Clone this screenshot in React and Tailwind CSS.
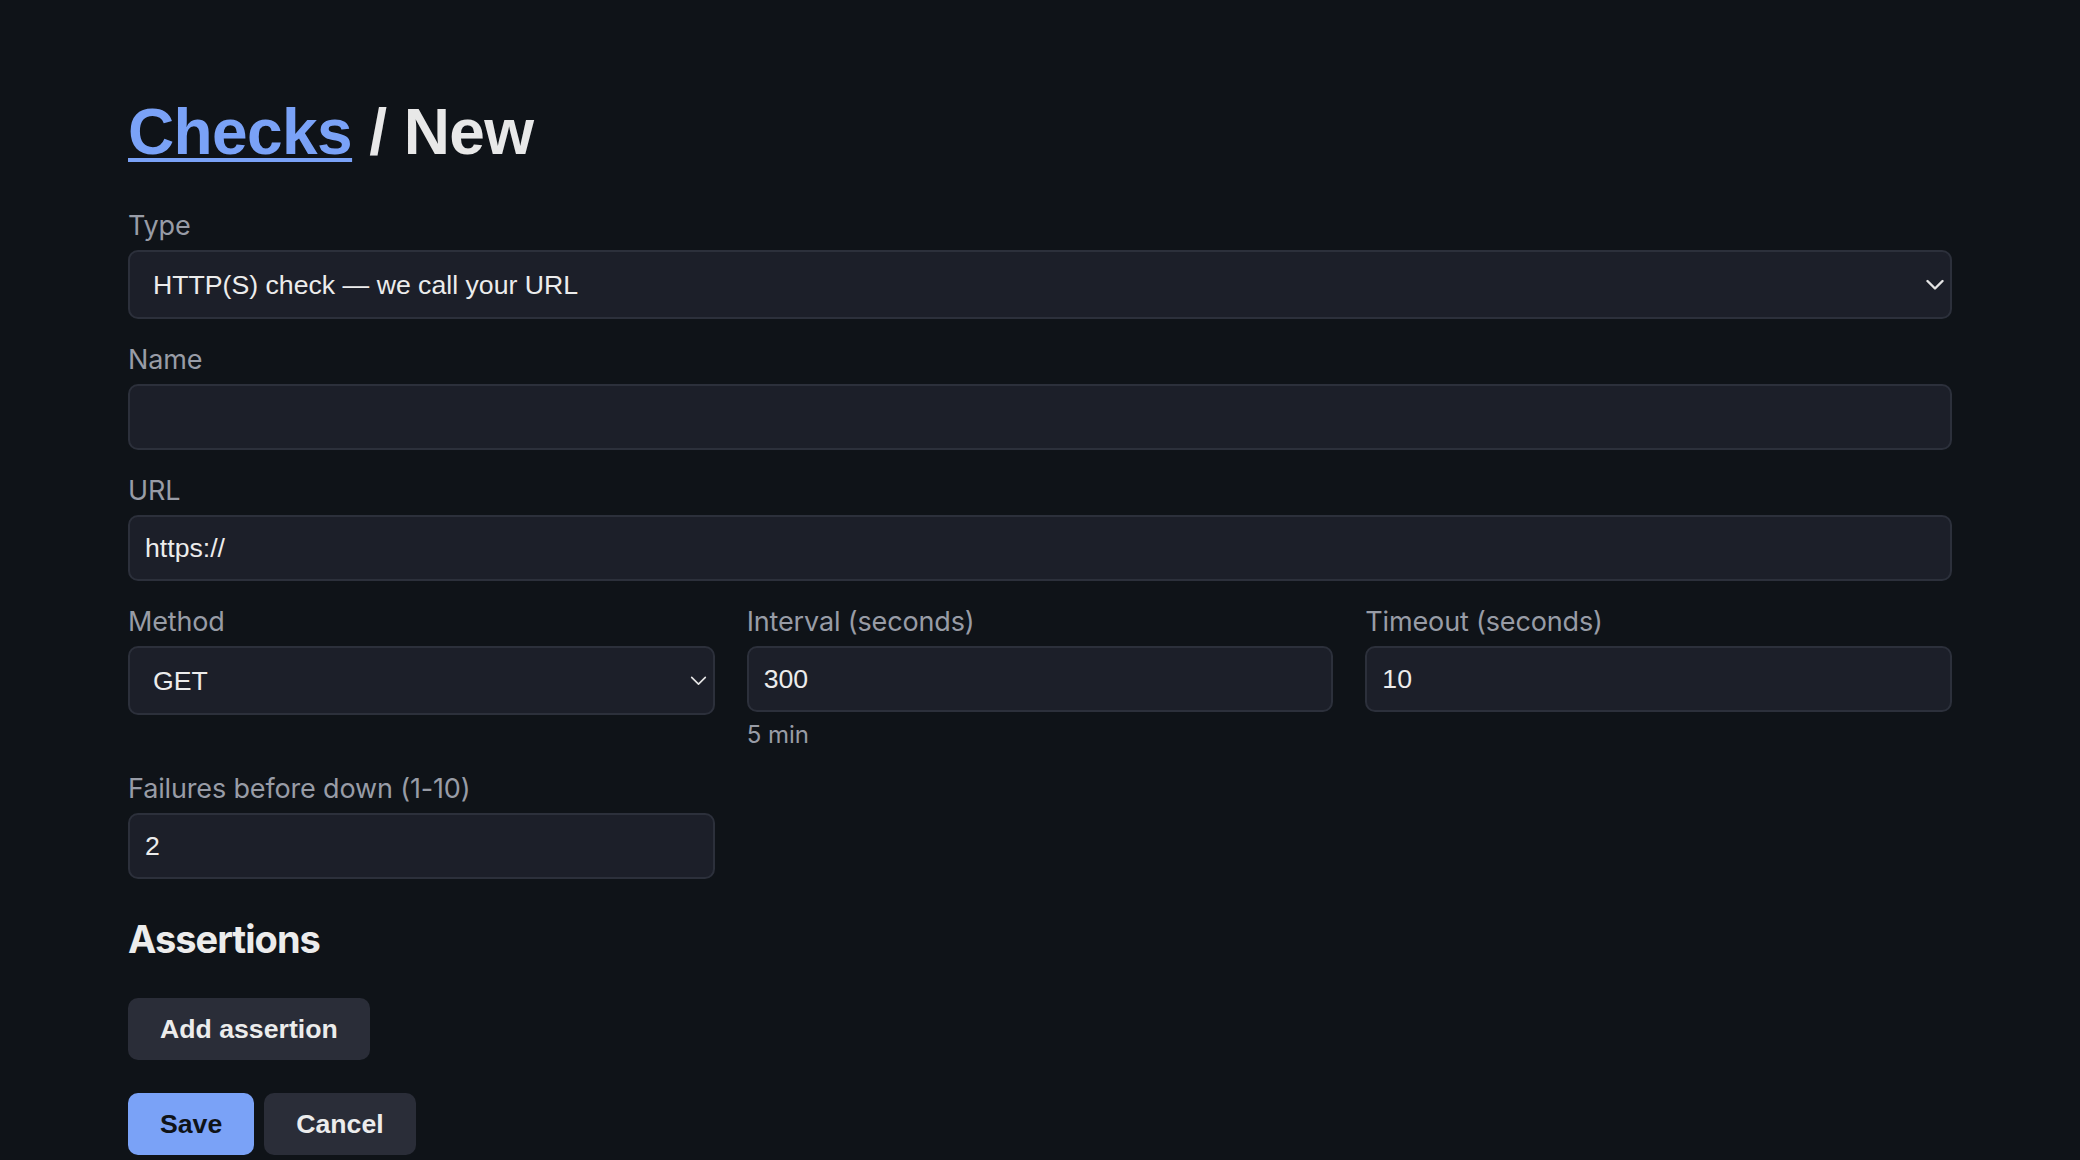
import React from 'react';

const labelCls = "block mb-2 text-[27px] leading-[33px] tracking-[-0.15px] text-[#989ca6] font-['Inter',sans-serif]";
const fieldCls =
  "w-full rounded-[10px] border-2 border-[#2c303b] bg-[#1c1f29] text-[26.67px] text-[#ececec] outline-none font-['Liberation_Sans',Arial,sans-serif]";

const Chevron = ({ size = 'w-[18px] h-[11px]', stroke = 2.4 }) => (
  <svg className={size} viewBox="0 0 18 11" fill="none">
    <path d="M1.5 1.5 L9 9 L16.5 1.5" stroke="#e4e4e4" strokeWidth={stroke} strokeLinecap="round" strokeLinejoin="round" />
  </svg>
);

const SelectField = ({ label, value, options, small }) => (
  <div>
    <label className={labelCls}>{label}</label>
    <div className="relative">
      <select defaultValue={value} className={`${fieldCls} h-[69px] appearance-none pl-[23px] pr-12`}>
        {options.map((o) => (
          <option key={o}>{o}</option>
        ))}
      </select>
      <span className="pointer-events-none absolute right-[8px] top-1/2 -translate-y-1/2">
        {small ? <Chevron size="w-[17px] h-[10px]" stroke={1.8} /> : <Chevron />}
      </span>
    </div>
  </div>
);

const TextField = ({ label, value, hint }) => (
  <div>
    <label className={labelCls}>{label}</label>
    <input type="text" defaultValue={value} className={`${fieldCls} h-[66px] px-[15px]`} />
    {hint && (
      <p className="mt-2 text-[24px] leading-[30px] text-[#989ca6] font-['Inter',sans-serif]">{hint}</p>
    )}
  </div>
);

const btnCls =
  "h-[62px] rounded-[10px] px-8 text-[26.67px] font-bold font-['Liberation_Sans',Arial,sans-serif]";

export default function App() {
  return (
    <div className="min-h-screen bg-[#0f1318] px-[128px] pt-[94px] pb-10">
      <h1 className="text-[64px] leading-[76px] tracking-[-0.6px] font-bold text-[#e8e8e8] font-['Liberation_Sans',Arial,sans-serif]">
        <a href="#" className="text-[#7aa2f7] underline decoration-4 underline-offset-4">
          Checks
        </a>{' '}
        / New
      </h1>

      <form className="mt-[39px]" onSubmit={(e) => e.preventDefault()}>
        <div className="flex flex-col gap-6">
          <SelectField
            label="Type"
            value="HTTP(S) check — we call your URL"
            options={['HTTP(S) check — we call your URL', 'Heartbeat — your job calls us']}
          />
          <TextField label="Name" value="" />
          <TextField label="URL" value="https://" />
        </div>

        <div className="mt-6 grid grid-cols-3 gap-8">
          <SelectField label="Method" value="GET" options={['GET', 'POST', 'HEAD']} small />
          <TextField label="Interval (seconds)" value="300" hint="5 min" />
          <TextField label="Timeout (seconds)" value="10" />
        </div>

        <div className="mt-[22px] grid grid-cols-3 gap-8">
          <TextField label="Failures before down (1-10)" value="2" />
        </div>

        <h2 className="mt-9 text-[38px] leading-[48px] tracking-[-1px] font-bold text-[#ececec] font-['Inter',sans-serif]">
          Assertions
        </h2>

        <div className="mt-[35px]">
          <button type="button" className={`${btnCls} bg-[#2a2d38] text-[#ececec]`}>
            Add assertion
          </button>
        </div>

        <div className="mt-[33px] flex gap-[10px]">
          <button type="submit" className={`${btnCls} bg-[#7aa2f7] text-[#0f1318]`}>
            Save
          </button>
          <button type="button" className={`${btnCls} bg-[#2a2d38] text-[#ececec]`}>
            Cancel
          </button>
        </div>
      </form>
    </div>
  );
}
